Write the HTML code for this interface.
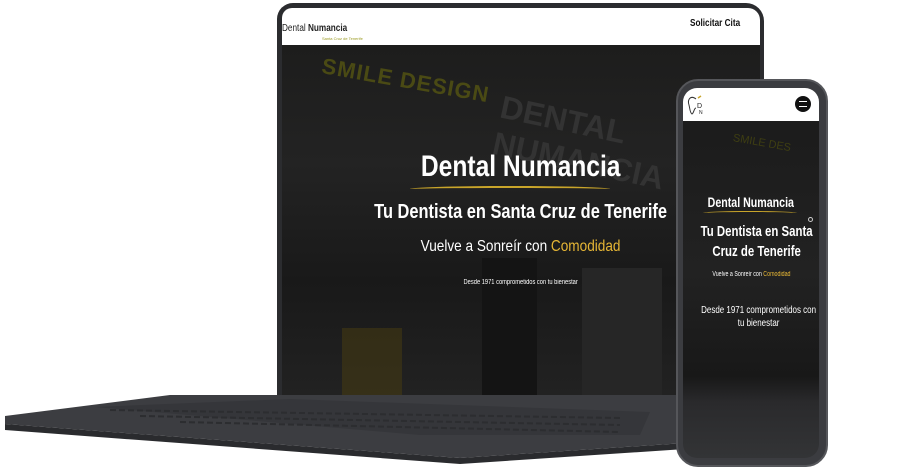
<!DOCTYPE html>
<html><head><meta charset="utf-8"><style>
*{margin:0;padding:0;box-sizing:border-box}
body{width:905px;height:469px;background:#fff;position:relative;overflow:hidden;font-family:"Liberation Sans",sans-serif}
.abs{position:absolute}
#lid{left:277px;top:3px;width:487px;height:400px;background:#2b2c2f;border-radius:16px 18px 4px 4px}
#scr{left:282px;top:8px;width:478px;height:390px;background:linear-gradient(180deg,#1b1b1a 0%,#232323 40%,#191919 70%,#222 100%);border-radius:10px 12px 0 0;overflow:hidden}
#hdr{left:0;top:0;width:478px;height:37px;background:#fff}
.t{color:#fff;text-align:center;position:absolute;white-space:nowrap}
.c{display:inline-block;transform:scaleX(.82)}
.n{display:inline-block;transform:scaleX(.76)}
#phone{left:676px;top:79px;width:152px;height:388px;background:#3b3c40;border-radius:22px;border:2px solid #55565a}
#pscr{left:683px;top:88px;width:136px;height:370px;background:linear-gradient(180deg,#1a1a1a 0%,#222 50%,#181818 78%,#2a2a2c 85%,#333436 100%);border-radius:14px;overflow:hidden}
#phdr{left:0;top:0;width:136px;height:33px;background:#fff}
</style></head><body>
<div id="lid" class="abs"></div>
<div id="scr" class="abs">
  <div id="hdr" class="abs">
    <div class="abs" style="left:0;top:15px;font-size:10px;color:#222"><span class="c" style="transform-origin:left">Dental <b>Numancia</b></span></div>
    <div class="abs" style="left:40px;top:28px;font-size:4px;color:#9a9a20">Santa Cruz de Tenerife</div>
    <div class="abs" style="left:408px;top:10px;font-size:10px;font-weight:bold;color:#111"><span class="c" style="transform-origin:left">Solicitar Cita</span></div>
  </div>
  <div class="abs" style="left:40px;top:45px;font-size:22px;font-weight:bold;color:#4a4a14;transform:rotate(10deg);transform-origin:left;letter-spacing:1px">SMILE DESIGN</div>
  <div class="abs" style="left:215px;top:80px;font-size:32px;font-weight:bold;color:#333;transform:rotate(12deg);transform-origin:left">DENTAL NUMANCIA</div>
  <div class="abs" style="left:60px;top:320px;width:60px;height:70px;background:#4a3d10;opacity:.5"></div>
  <div class="abs" style="left:200px;top:250px;width:55px;height:140px;background:#141414"></div>
  <div class="abs" style="left:300px;top:260px;width:80px;height:130px;background:#262626"></div>
  <div class="t" style="left:0;width:478px;top:142px;font-size:30px;font-weight:bold"><span class="c">Dental Numancia</span></div>
  <div class="abs" style="left:128px;top:178px;width:200px;height:6px;border-top:2px solid #c9a52a;border-radius:50%"></div>
  <div class="t" style="left:0;width:478px;top:193px;font-size:20px;font-weight:bold"><span class="c">Tu Dentista en Santa Cruz de Tenerife</span></div>
  <div class="t" style="left:0;width:478px;top:230px;font-size:16px"><span class="c" style="transform:scaleX(.85)">Vuelve a Sonreír con <b style="color:#e6b635;font-weight:normal">Comodidad</b></span></div>
  <div class="t" style="left:0;width:478px;top:271px;font-size:7px"><span class="c">Desde 1971 comprometidos con tu bienestar</span></div>
</div>
<svg class="abs" style="left:0;top:380px" width="710" height="89">
  <polygon points="5,36 170,15 700,15 700,62 460,78 5,44" fill="#3c3d41"/>
  <polygon points="5,44 460,78 700,62 700,68 460,84 5,50" fill="#2a2b2e"/>
  <polygon points="95,27 290,19 650,32 640,55 420,55" fill="#35363a"/>
  <g stroke="#2c2d30" stroke-width="2" stroke-dasharray="6 3">
    <line x1="110" y1="30" x2="620" y2="38"/><line x1="140" y1="36" x2="620" y2="45"/><line x1="180" y1="42" x2="620" y2="52"/>
  </g>
</svg>
<div id="phone" class="abs"></div>
<div id="pscr" class="abs">
  <div id="phdr" class="abs">
    <svg class="abs" style="left:3px;top:7px" width="20" height="22"><path d="M10 4 C5 0 1 4 3 10 C4 14 4 18 6 19 C8 18 8 13 10 13" fill="none" stroke="#333" stroke-width="1"/><path d="M12 3 L15 1" stroke="#c9a52a" stroke-width="1.5"/><text x="11" y="13" font-size="7" fill="#222">D</text><text x="13" y="19" font-size="5" fill="#222">N</text></svg>
    <div class="abs" style="left:112px;top:8px;width:16px;height:16px;border-radius:50%;background:#111"></div>
    <div class="abs" style="left:116px;top:13px;width:8px;height:6px;border-top:1px solid #fff;border-bottom:1px solid #fff"></div>
  </div>
  <div class="abs" style="left:50px;top:44px;font-size:11px;color:#3e3e12;transform:rotate(10deg);transform-origin:left">SMILE DES</div>
  <div class="t" style="left:0;width:136px;top:106px;font-size:14px;font-weight:bold"><span class="n">Dental Numancia</span></div>
  <div class="abs" style="left:20px;top:123px;width:94px;height:4px;border-top:1px solid #c9a52a;border-radius:50%"></div>
  <div class="t" style="left:0;width:136px;top:134px;font-size:15px;line-height:20px;font-weight:bold"><span class="n">Tu Dentista en Santa<br>Cruz de Tenerife</span></div>
  <div class="t" style="left:0;width:136px;top:183px;font-size:7px"><span class="n">Vuelve a Sonreír con <span style="color:#e6b635">Comodidad</span></span></div>
  <div class="t" style="left:0;width:136px;top:216px;font-size:10.5px;line-height:13px"><span class="n">Desde 1971 comprometidos con<br>tu bienestar</span></div>
  <div class="abs" style="left:125px;top:129px;width:5px;height:5px;border:1px solid #ccc;border-radius:50%"></div>
</div>
</body></html>
